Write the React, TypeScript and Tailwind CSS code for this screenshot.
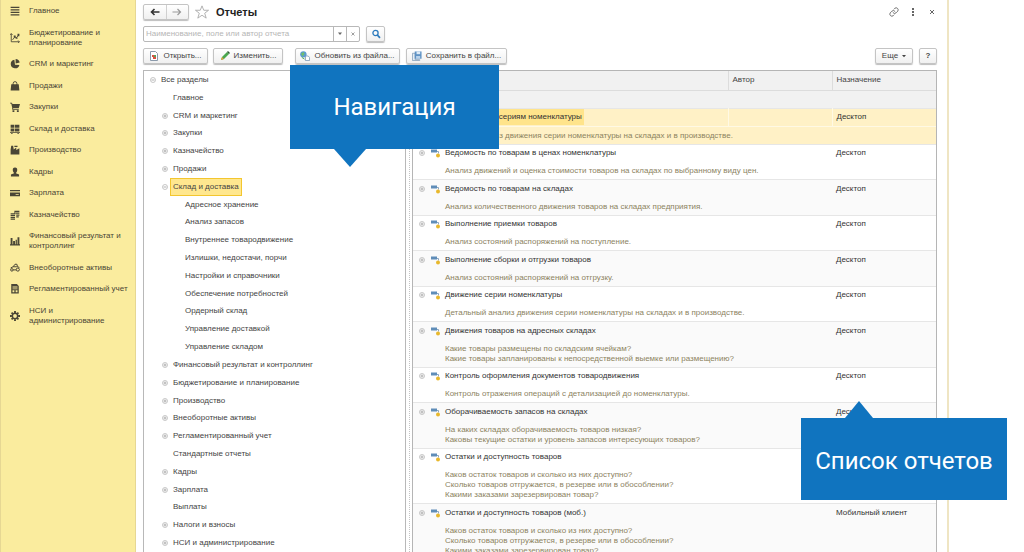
import React, { useState } from "react";

interface Section {
  label: string;
  icon: React.ReactNode;
}

interface TreeNode {
  label: string;
  level: number;
  state?: "open" | "closed";
}

interface Report {
  title: string;
  lines: string[];
  target?: string;
}

const sections: Section[] = [
  { label: "Главное", icon: <path d="M1 1h14v2H1zM1 5h14v2H1zM1 9h14v2H1zM1 13h14v2H1z" /> },
  {
    label: "Бюджетирование и планирование",
    icon: (
      <>
        <path d="M2 1v13h13M0 3l2-2 2 2M13 12l2 2-2 2M4 11l4-5 2 2 4-5" fill="none" stroke="currentColor" strokeWidth="1.4" />
        <path d="M6 4h3v3H6zM12 1h3v4h-3zM9 7h3v2H9z" />
      </>
    ),
  },
  {
    label: "CRM и маркетинг",
    icon: <path d="M7 1a7 7 0 1 0 8 8.500L8 9zM9 0v7l6.500-1.500A7 7 0 0 0 9 0z" />,
  },
  {
    label: "Продажи",
    icon: (
      <>
        <path d="M2 5h12l1 10H1z" />
        <path d="M5 7V4a3 3 0 0 1 6 0v3" fill="none" stroke="currentColor" strokeWidth="1.5" />
      </>
    ),
  },
  { label: "Закупки", icon: <path d="M0 1h3l1 2h12l-2 7H5v1h9v1.500H3.500V9L2 2.500H0zM4 13h3v3H4zM11 13h3v3h-3z" /> },
  { label: "Склад и доставка", icon: <path d="M1 1h6v5H1zM8 1h7v5H8zM1 7h6v5H1zM8 7h7v5H8zM0 13h16v1.500H0zM2 14h2v2H2zM12 14h2v2h-2z" /> },
  { label: "Производство", icon: <path d="M1 15V7l1-6h3l1 6 4-3v4l5-3v10zM7 1h5v2H7z" /> },
  {
    label: "Кадры",
    icon: <path d="M8 1a3.500 3.500 0 0 1 3.500 4c0 2-1 3.500-2 4v1l5 2v3h-13v-3l5-2V9c-1-.5-2-2-2-4A3.500 3.500 0 0 1 8 1z" />,
  },
  { label: "Зарплата", icon: <path d="M0 3h16v2H0zM0 7h16v6H0zm9 3v1h5v-1z" fillRule="evenodd" /> },
  {
    label: "Казначейство",
    icon: <path d="M7 1h8v2H7zM9 4h6v2H9zM10 7h5v2h-5zM10 10h4v2h-4zM1 5h6v2H1zM1 8h7v2H1zM1 11h7v2H1zM1 14h7v1.500H1zM7 1h1.500v6H7z" />,
  },
  { label: "Финансовый результат и контроллинг", icon: <path d="M1 3h3v10H1zM5 8h3v5H5zM9 6h2v7H9zM12 2h3v11h-3zM0 13h16v2H0z" /> },
  {
    label: "Внеоборотные активы",
    icon: (
      <g fill="none" stroke="currentColor" strokeWidth="1.600">
        <circle cx="3" cy="11" r="2" />
        <circle cx="12.500" cy="10.500" r="2.500" />
        <path d="M1 8l4-2 3-4h3l1 4 3 1M5 11h5M5 6h6" />
      </g>
    ),
  },
  {
    label: "Регламентированный учет",
    icon: <path d="M2 0h9l3 3v12H2zm2 4v1.500h8V4zm0 3v1.500h8V7zm0 3v3h3v-3zm5 0v3h3v-3z" fillRule="evenodd" />,
  },
  {
    label: "НСИ и администрирование",
    icon: (
      <>
        <circle cx="8" cy="8" r="4.300" fill="none" stroke="currentColor" strokeWidth="2.400" />
        <path d="M6.500 0h3v3h-3zM6.500 13h3v3h-3zM0 6.500h3v3H0zM13 6.500h3v3h-3zM1.500 3.500l2-2 2 2-2 2zM10.500 3.500l2-2 2 2-2 2zM1.500 12.500l2-2 2 2-2 2zM10.500 12.500l2-2 2 2-2 2z" />
      </>
    ),
  },
];

const tree: TreeNode[] = [
  { label: "Все разделы", level: 0, state: "open" },
  { label: "Главное", level: 1 },
  { label: "CRM и маркетинг", level: 1, state: "closed" },
  { label: "Закупки", level: 1, state: "closed" },
  { label: "Казначейство", level: 1, state: "closed" },
  { label: "Продажи", level: 1, state: "closed" },
  { label: "Склад и доставка", level: 1, state: "open" },
  { label: "Адресное хранение", level: 2 },
  { label: "Анализ запасов", level: 2 },
  { label: "Внутреннее товародвижение", level: 2 },
  { label: "Излишки, недостачи, порчи", level: 2 },
  { label: "Настройки и справочники", level: 2 },
  { label: "Обеспечение потребностей", level: 2 },
  { label: "Ордерный склад", level: 2 },
  { label: "Управление доставкой", level: 2 },
  { label: "Управление складом", level: 2 },
  { label: "Финансовый результат и контроллинг", level: 1, state: "closed" },
  { label: "Бюджетирование и планирование", level: 1, state: "closed" },
  { label: "Производство", level: 1, state: "closed" },
  { label: "Внеоборотные активы", level: 1, state: "closed" },
  { label: "Регламентированный учет", level: 1, state: "closed" },
  { label: "Стандартные отчеты", level: 1 },
  { label: "Кадры", level: 1, state: "closed" },
  { label: "Зарплата", level: 1, state: "closed" },
  { label: "Выплаты", level: 1 },
  { label: "Налоги и взносы", level: 1, state: "closed" },
  { label: "НСИ и администрирование", level: 1, state: "closed" },
];

const reports: Report[] = [
  {
    title: "Ведомость по сериям номенклатуры",
    lines: ["Краткий анализ движения серии номенклатуры на складах и в производстве."],
    target: "Десктоп",
  },
  {
    title: "Ведомость по товарам в ценах номенклатуры",
    lines: ["Анализ движений и оценка стоимости товаров на складах по выбранному виду цен."],
    target: "Десктоп",
  },
  {
    title: "Ведомость по товарам на складах",
    lines: ["Анализ количественного движения товаров на складах предприятия."],
    target: "Десктоп",
  },
  { title: "Выполнение приемки товаров", lines: ["Анализ состояний распоряжений на поступление."], target: "Десктоп" },
  { title: "Выполнение сборки и отгрузки товаров", lines: ["Анализ состояний распоряжений на отгрузку."], target: "Десктоп" },
  {
    title: "Движение серии номенклатуры",
    lines: ["Детальный анализ движения серии номенклатуры на складах и в производстве."],
    target: "Десктоп",
  },
  {
    title: "Движения товаров на адресных складах",
    lines: ["Какие товары размещены по складским ячейкам?", "Какие товары запланированы к непосредственной выемке или размещению?"],
    target: "Десктоп",
  },
  {
    title: "Контроль оформления документов товародвижения",
    lines: ["Контроль отражения операций с детализацией до номенклатуры."],
    target: "Десктоп",
  },
  {
    title: "Оборачиваемость запасов на складах",
    lines: ["На каких складах оборачиваемость товаров низкая?", "Каковы текущие остатки и уровень запасов интересующих товаров?"],
    target: "Десктоп",
  },
  {
    title: "Остатки и доступность товаров",
    lines: [
      "Каков остаток товаров и сколько из них доступно?",
      "Сколько товаров отгружается, в резерве или в обособлении?",
      "Какими заказами зарезервирован товар?",
    ],
  },
  {
    title: "Остатки и доступность товаров (моб.)",
    lines: [
      "Каков остаток товаров и сколько из них доступно?",
      "Сколько товаров отгружается, в резерве или в обособлении?",
      "Какими заказами зарезервирован товар?",
    ],
    target: "Мобильный клиент",
  },
];

const toolButton =
  "flex h-4 items-center justify-center rounded-xs border border-[#c4c4c4] bg-gradient-to-b from-white to-[#f0f0f0] shadow-[0_1px_1px_#bdbdbd]";

const Expander: React.FC<{ open?: boolean }> = ({ open }) => (
  <svg viewBox="0 0 12 12" className="size-1.5 shrink-0" fill="none" stroke="#a8a8a8">
    <circle cx="6" cy="6" r="5" strokeWidth="1.300" />
    <path d={open ? "M3 6h6" : "M3 6h6M6 3v6"} strokeWidth="1.800" />
  </svg>
);

const Sidebar: React.FC = () => (
  <nav className="w-[136px] shrink-0 border-x border-[#e6d793] bg-[#faec9e] pt-1.5 pr-1.5 pl-[9px]">
    <ul className="flex h-[320px] flex-col justify-between">
      {sections.map((s) => (
        <li key={s.label}>
          <a href="#" className="flex items-center gap-[9px] leading-[10px] text-[#4a4636]">
            <svg viewBox="0 0 16 16" className="size-2.5 shrink-0" fill="currentColor">
              {s.icon}
            </svg>
            <span>{s.label}</span>
          </a>
        </li>
      ))}
    </ul>
  </nav>
);

const TitleBar: React.FC = () => (
  <header className="flex h-4 items-center">
    <div className={`${toolButton} w-[46px]`}>
      <button aria-label="Назад" className="flex h-full flex-1 items-center justify-center border-r border-[#d0d0d0]">
        <svg viewBox="0 0 10 8" className="h-2 w-2.5" fill="none" stroke="#333" strokeWidth="1.600">
          <path d="M9.500 4H1.500M4.500 1L1.500 4l3 3" />
        </svg>
      </button>
      <button aria-label="Вперед" className="flex h-full flex-1 items-center justify-center">
        <svg viewBox="0 0 10 8" className="h-2 w-2.5" fill="none" stroke="#999" strokeWidth="1.200">
          <path d="M.5 4h8M5.500 1l3 3-3 3" />
        </svg>
      </button>
    </div>
    <svg viewBox="0 0 16 16" className="ml-1.5 size-3.5" fill="none" stroke="#a8a8a8" strokeWidth="1">
      <path d="M8 1l2 5h5.500l-4.400 3.400 1.700 5.600L8 11.700 3.200 15l1.700-5.600L.5 6H6z" />
    </svg>
    <h1 className="ml-[7px] text-[11px] font-bold text-[#222]">Отчеты</h1>
    <div className="ml-auto flex items-center gap-2.5 text-[#666]">
      <button aria-label="Ссылка">
        <svg viewBox="0 0 24 24" className="size-2.5" fill="none" stroke="currentColor" strokeWidth="2.200" strokeLinecap="round">
          <path d="M10 14a5 5 0 0 0 7 0l4-4a5 5 0 0 0-7-7l-2 2" />
          <path d="M14 10a5 5 0 0 0-7 0l-4 4a5 5 0 0 0 7 7l2-2" />
        </svg>
      </button>
      <button aria-label="Меню">
        <svg viewBox="0 0 8 8" className="size-2" fill="currentColor">
          <path d="M3 0h2v2H3zM3 3h2v2H3zM3 6h2v2H3z" />
        </svg>
      </button>
      <button aria-label="Закрыть">
        <svg viewBox="0 0 10 10" className="size-2.5" fill="none" stroke="currentColor">
          <path d="M3 3l4 4M7 3L3 7" />
        </svg>
      </button>
    </div>
  </header>
);

const SearchBar: React.FC = () => {
  const [query, setQuery] = useState("");

  return (
    <div className="mt-1.5 flex h-4 items-center gap-1.5">
      <div className="flex h-4 w-[217px] rounded-xs border border-[#b8b8b8]">
        <input
          aria-label="Поиск отчета"
          className="min-w-0 flex-1 px-0.5 placeholder:text-[#b5b5b5]"
          placeholder="Наименование, поле или автор отчета"
          value={query}
          onChange={(e) => setQuery(e.target.value)}
        />
        <button aria-label="Показать список" className="flex w-[13px] items-center justify-center border-l border-[#b8b8b8]">
          <svg viewBox="0 0 6 4" className="h-1 w-1.5" fill="#666">
            <path d="M1 .5h4L3 3z" />
          </svg>
        </button>
        <button
          aria-label="Очистить"
          className="flex w-[13px] items-center justify-center border-l border-[#b8b8b8]"
          onClick={() => setQuery("")}
        >
          <svg viewBox="0 0 6 6" className="size-1.5" stroke="#888" strokeWidth=".8">
            <path d="M1.500 1.500l3 3M4.500 1.500l-3 3" />
          </svg>
        </button>
      </div>
      <button aria-label="Найти" className={`${toolButton} w-[19px]`}>
        <svg viewBox="0 0 10 10" className="size-2.5" fill="none" stroke="#2d7bbd" strokeWidth="1.300">
          <circle cx="4.500" cy="4" r="2.600" />
          <path d="M6.300 6L9 8.800" strokeWidth="1.800" />
        </svg>
      </button>
    </div>
  );
};

const Toolbar: React.FC = () => (
  <div className="mt-1.5 flex h-4 items-center">
    <button className={`${toolButton} w-[65px] gap-1`}>
      <svg viewBox="0 0 10 10" className="size-2.5" fill="none">
        <path d="M1.500.5h5l2 2v7h-7z" fill="#fff" stroke="#8b9aab" />
        <path d="M3 4h2v2H3zM4 6h3v2H4z" fill="#d9503f" />
        <path d="M5 4h2v2H5z" fill="#5aa25a" />
      </svg>
      Открыть...
    </button>
    <button className={`${toolButton} ml-[5px] w-[70px] gap-1`}>
      <svg viewBox="0 0 10 10" className="size-2.5">
        <path d="M1 9l1-3 5-5 2 2-5 5z" fill="#4aa84f" />
        <path d="M7 1l1-1 2 2-1 1z" fill="#2d5a33" />
        <path d="M1 9l1-3 2 2z" fill="#e29a3c" />
      </svg>
      Изменить...
    </button>
    <button className={`${toolButton} ml-3 w-[105px] gap-1`}>
      <svg viewBox="0 0 11 11" className="size-2.5">
        <circle cx="3.700" cy="3.700" r="3.500" fill="#5a9bd0" />
        <path d="M1 3l3-2 1 2-2 3z" fill="#71bf6c" />
        <path d="M6 5.500h3l1.500 1.500v3.500H6z" fill="#fff" stroke="#6d8eae" strokeWidth=".8" />
        <path d="M2 7l3 2" stroke="#4aa84f" />
      </svg>
      Обновить из файла...
    </button>
    <button className={`${toolButton} ml-1.5 w-[101px] gap-1`}>
      <svg viewBox="0 0 11 11" className="size-2.5">
        <path d="M.5 2.500h3v7h5v1h-8z" fill="#e6edf4" stroke="#7b98b5" strokeWidth=".8" />
        <path d="M3 .5h7.500v8H3z" fill="#5f92c4" />
        <path d="M5 .5h4v3H5z" fill="#dceaf6" />
        <path d="M4.500 5.500h4.500v3H4.500z" fill="#b9d2ea" />
      </svg>
      Сохранить в файл...
    </button>
    <button className={`${toolButton} ml-auto w-[38px] gap-1`}>
      Еще
      <svg viewBox="0 0 6 4" className="h-1 w-1" fill="#444">
        <path d="M0 .5h6L3 4z" />
      </svg>
    </button>
    <button aria-label="Справка" className={`${toolButton} ml-1.5 w-[18px] font-bold`}>
      ?
    </button>
  </div>
);

const SectionTree: React.FC = () => {
  const [selected, setSelected] = useState("Склад и доставка");

  return (
    <ul className="flex h-full w-[263px] shrink-0 flex-col border-t border-x border-[#b8b8b8]">
      {tree.map((n) => (
        <li
          key={n.label}
          className={`flex flex-1 items-center ${n.level === 0 ? "pl-1.5" : n.level === 1 ? "pl-[18px]" : "pl-[30px]"}`}
        >
          <span className="flex w-2 shrink-0">{n.state && <Expander open={n.state === "open"} />}</span>
          <button
            onClick={() => setSelected(n.label)}
            className={`flex h-full items-center border px-0.5 ${
              selected === n.label ? "border-[#f3c62f] bg-[#ffe78f]" : "border-transparent"
            }`}
          >
            {n.label}
          </button>
        </li>
      ))}
    </ul>
  );
};

const ReportTable: React.FC = () => (
  <div className="h-full min-w-0 flex-1 overflow-hidden border-t border-x border-[#b5b5b5]">
    <table className="w-full table-fixed border-collapse text-left">
      <thead className="bg-[#f1f1f1]">
        <tr className="h-[19px] border-b border-[#dcdcdc]">
          <th aria-label="Отчет" />
          <th className="w-[104px] border-l border-[#dcdcdc] pl-1 font-normal">Автор</th>
          <th className="w-[104px] border-l border-[#dcdcdc] pl-1 font-normal">Назначение</th>
        </tr>
        <tr className="h-[18px]">
          <td colSpan={3} />
        </tr>
      </thead>
      {reports.map((r, i) => (
        <tbody
          key={r.title}
          className={`border-t border-[#e6e6e6] ${i === 0 ? "bg-[#fff1c6]" : i % 2 === 0 ? "bg-[#fafafa]" : "bg-white"}`}
        >
          <tr className="h-[18px]">
            <td className="p-0">
              <div className="flex items-center pl-1.5">
                <Expander />
                <svg viewBox="0 0 10 10" className="ml-1.5 size-2.5 shrink-0">
                  <path d="M0 1.500h6v3H0z" fill="#5f8db8" />
                  <path d="M6 3.500h1.500v2" stroke="#8aa5c0" fill="none" />
                  <circle cx="7" cy="7.500" r="2" fill="#e8b82c" />
                </svg>
                <span className={`flex h-4 items-center pr-0.5 pl-1 text-[#333] ${i === 0 ? "bg-[#ffe48b]" : ""}`}>{r.title}</span>
              </div>
            </td>
            <td className={i === 0 ? "border-l border-[#fff9e4]" : ""} />
            <td className={`p-0 pl-1 text-[#333] ${i === 0 ? "border-l border-[#fff9e4]" : ""}`}>{r.target}</td>
          </tr>
          <tr className={i === 0 ? "border-t border-[#fff9e4]" : ""}>
            <td colSpan={3} className="p-0 pt-1 pb-[3px] pl-8 leading-[10px] text-[#8c835f]">
              {r.lines.map((line) => (
                <p key={line}>{line}</p>
              ))}
            </td>
          </tr>
        </tbody>
      ))}
    </table>
  </div>
);

const App: React.FC = () => (
  <div className="relative flex h-screen overflow-hidden bg-white font-['Liberation_Sans',Arial,sans-serif] text-[8px] leading-[10px] text-[#444]">
    <Sidebar />
    <main className="flex min-w-0 flex-1 flex-col border-r-2 border-[#efe5c3] pt-1 pr-2.5 pl-[7px]">
      <TitleBar />
      <SearchBar />
      <Toolbar />
      <div className="mt-1.5 flex min-h-0 flex-1">
        <SectionTree />
        <div className="flex w-1.5 shrink-0 justify-center">
          <div className="border-l border-dotted border-[#c4c4c4]" />
        </div>
        <ReportTable />
      </div>
    </main>
    <div className="w-[75px] shrink-0" />

    <div className="absolute top-[65px] left-[290px] flex h-[84px] w-[209px] items-center justify-center bg-[#1074bf] font-['Roboto',sans-serif] text-2xl text-white">
      Навигация
      <svg viewBox="0 0 32 18" className="absolute top-full left-11 h-[18px] w-8" fill="#1074bf">
        <path d="M0 0h32L16 18z" />
      </svg>
    </div>
    <div className="absolute top-[418px] left-[801px] flex h-[82px] w-[206px] items-center justify-center bg-[#1074bf] pt-1 font-['Roboto',sans-serif] text-2xl text-white">
      Список отчетов
      <svg viewBox="0 0 28 17" className="absolute bottom-full left-11 h-[17px] w-7" fill="#1074bf">
        <path d="M0 17h28L14 0z" />
      </svg>
    </div>
  </div>
);

export default App;
